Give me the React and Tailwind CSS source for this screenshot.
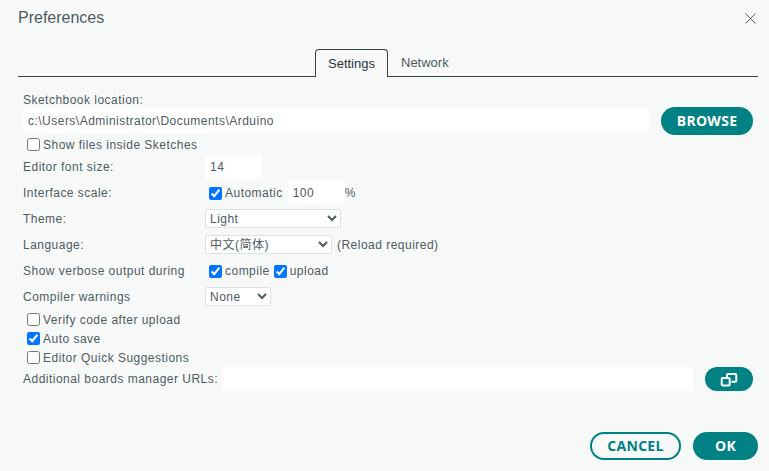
import React from 'react';

const Row = ({ label, children, className = '' }) => (
  <div className={`flex items-center h-[26px] ${className}`}>
    <div className="w-[182px] shrink-0">{label}</div>
    {children}
  </div>
);

const Check = ({ checked, label, className = '' }) => (
  <label className={`flex items-center ${className}`}>
    <input type="checkbox" defaultChecked={checked} className="w-[13px] h-[13px] m-0 mr-[3px] shrink-0" />
    <span>{label}</span>
  </label>
);

const TextInput = ({ value, className = '' }) => (
  <input
    type="text"
    defaultValue={value}
    className={`bg-white h-6 px-[5px] outline-none text-[#4e5b61] ${className}`}
  />
);

const Select = ({ value, className = '' }) => (
  <select
    defaultValue={value}
    className={`h-[19px] mb-px bg-white border border-[#dae3e3] rounded-[2px] text-[#4e5b61] outline-none ${className}`}
  >
    <option>{value}</option>
  </select>
);

export default function App() {
  return (
    <div className="w-[769px] h-[471px] bg-[#f7f9f9] text-[#4e5b61] text-[12px] tracking-[0.04em] font-['Liberation_Sans','Noto_Sans_CJK_SC',sans-serif] overflow-hidden flex flex-col">
      {/* titulo */}
      <div className="flex items-center justify-between h-[36px] pl-[18px] pr-[13px]">
        <span className="text-[16px] tracking-normal">Preferences</span>
        <svg width="11" height="11" viewBox="0 0 11 11" stroke="#4e5b61" strokeWidth="1" fill="none">
          <path d="M0.5 0.5 L10.5 10.5 M10.5 0.5 L0.5 10.5" />
        </svg>
      </div>

      {/* tabs */}
      <div className="flex h-[28px] mt-[13px] mx-[11px] ml-[18px] border-b border-[#374146] pl-[297px] text-[13px]">
        <div className="w-[73px] h-[28px] bg-[#f7f9f9] border border-b-0 border-[#374146] rounded-t-[4px] flex items-center justify-center text-[#2c353a] tracking-normal">
          Settings
        </div>
        <div className="h-[27px] flex items-center pl-[13px] tracking-normal">Network</div>
      </div>

      <div className="pl-[23px] pr-4 mt-[14px]">
        <div className="h-[18px] flex items-center">Sketchbook location:</div>
        <div className="flex items-center h-6">
          <TextInput value="c:\Users\Administrator\Documents\Arduino" className="w-[626px]" />
          <button className="ml-3 w-[92px] h-7 pb-px rounded-full bg-[#008184] text-white font-['Open_Sans',sans-serif] font-bold text-[14px] tracking-[0.02em]">
            BROWSE
          </button>
        </div>

        <Check label="Show files inside Sketches" className="ml-1 mt-px h-[21px]" />

        <div className="flex items-center h-6">
          <div className="w-[182px] shrink-0">Editor font size:</div>
          <TextInput value="14" className="w-[57px]" />
        </div>

        <Row label="Interface scale:" className="mt-px">
          <Check checked label="Automatic" className="ml-1" />
          <TextInput value="100" className="w-[57px] ml-[5px]" />
          <span>%</span>
        </Row>

        <Row label="Theme:">
          <Select value="Light" className="w-[136px]" />
        </Row>

        <Row label="Language:">
          <Select value="中文(简体)" className="w-[127px]" />
          <span className="ml-[5px]">(Reload required)</span>
        </Row>

        <Row label="Show verbose output during">
          <Check checked label="compile" className="ml-1" />
          <Check checked label="upload" className="ml-1" />
        </Row>

        <Row label="Compiler warnings">
          <Select value="None" className="w-[66px]" />
        </Row>

        <div className="ml-1">
          <Check label="Verify code after upload" className="h-[19px]" />
          <Check checked label="Auto save" className="h-[19px]" />
          <Check label="Editor Quick Suggestions" className="h-[19px]" />
        </div>

        <div className="flex items-center h-6">
          <span className="w-[200px] shrink-0">Additional boards manager URLs:</span>
          <TextInput className="w-[470px]" />
          <button className="ml-3 w-12 h-6 rounded-full bg-[#008184] flex items-center justify-center">
            <svg width="18" height="16" viewBox="0 0 18 16" fill="none" stroke="#ffffff" strokeWidth="2">
              <rect x="1.700" y="7" width="8" height="7.500" rx="1" />
              <path d="M7 6V4a1 1 0 0 1 1-1h7.300a1 1 0 0 1 1 1v5.700a1 1 0 0 1-1 1H11.500" />
            </svg>
          </button>
        </div>
      </div>

      {/* botones */}
      <div className="flex justify-end gap-3 pr-[11px] mt-[41px] font-['Open_Sans',sans-serif] font-bold text-[14px] tracking-[0.02em]">
        <button className="w-[91px] h-7 pb-[2px] rounded-full border-2 border-[#008184] text-[#008184]">CANCEL</button>
        <button className="w-[65px] h-7 pb-[2px] rounded-full bg-[#008184] text-white">OK</button>
      </div>
    </div>
  );
}
